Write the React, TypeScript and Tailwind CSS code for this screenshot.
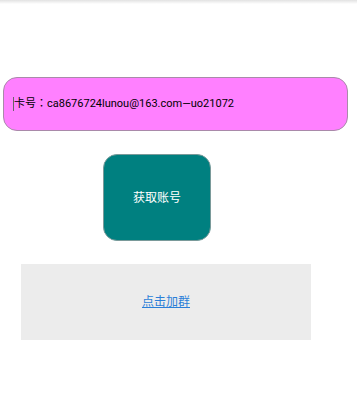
const font = { fontFamily: '"Roboto", "Noto Sans CJK TC", sans-serif' };

export default function App() {
  return (
    <div className="relative h-[413px] w-[357px] bg-white" style={font}>
      <div className="h-[4px] w-full bg-gradient-to-b from-[#e2e2e2] to-white" />
      <div className="pt-[73px]">
        <div className="ml-[3px] flex h-[54px] w-[345px] items-center rounded-[14px] border border-[#a98aa9] bg-[#ff80ff] pl-[9px]">
          <span className="h-[14px] w-px bg-[#666]" />
          <span className="pt-[1px] text-[11px] text-black">卡号：ca8676724lunou@163.com—uo21072</span>
        </div>
        <button className="ml-[103px] mt-[23px] flex h-[87px] w-[108px] items-center justify-center rounded-[14px] border border-[#7a9a9a] bg-[#008080] text-[12px] text-white">
          获取账号
        </button>
        <div className="ml-[21px] mt-[23px] flex h-[76px] w-[290px] items-center justify-center bg-[#ececec]">
          <a className="text-[12px] text-[#2b7fd8] underline">点击加群</a>
        </div>
      </div>
    </div>
  );
}
